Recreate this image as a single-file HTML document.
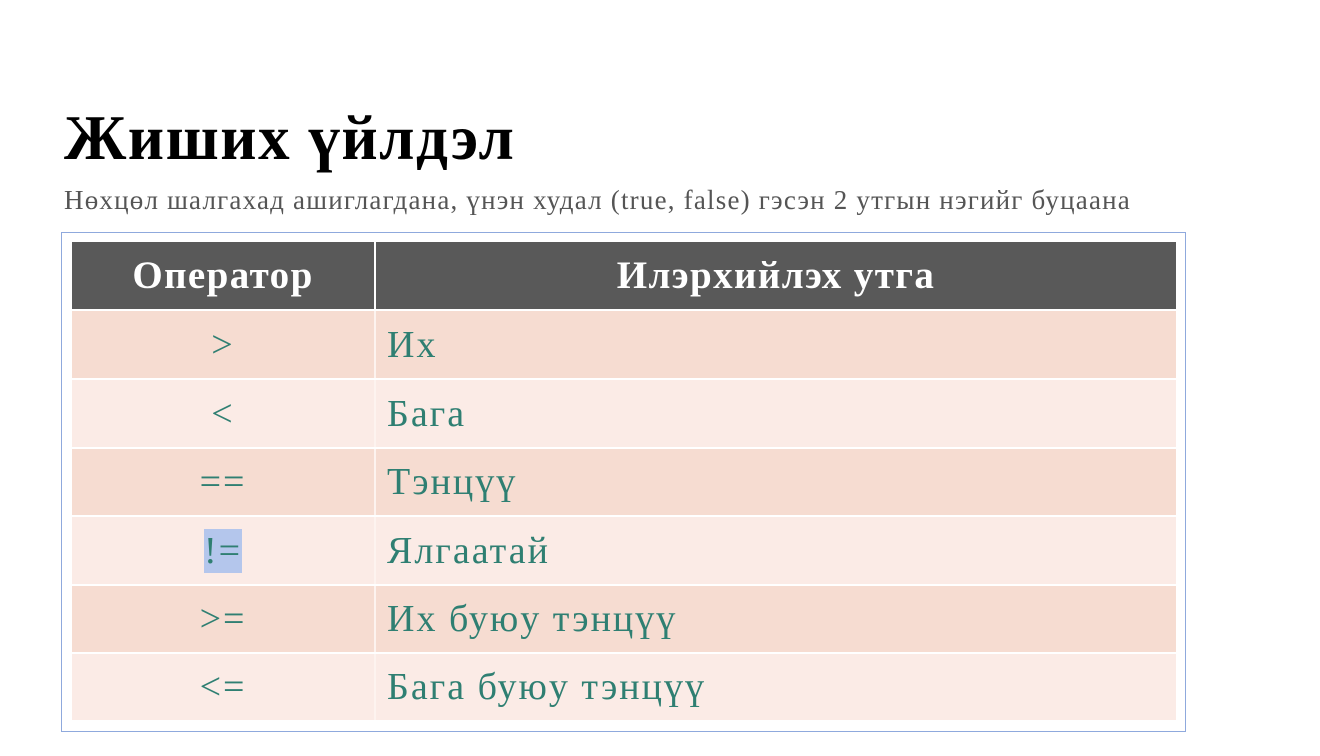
<!DOCTYPE html>
<html><head><meta charset="utf-8"><style>
body{margin:0;width:1320px;height:756px;background:#fff;font-family:"Liberation Serif",serif;position:relative;overflow:hidden}
h1{position:absolute;left:64px;top:102px;margin:0;font-size:63px;font-weight:bold;color:#000;line-height:72px;letter-spacing:1.5px}
.sub{position:absolute;left:64px;top:185px;font-size:27px;color:#555;white-space:nowrap;letter-spacing:1.2px}
.frame{position:absolute;left:61px;top:232px;width:1125px;height:500px;border:1px solid #8fa9dd;box-sizing:border-box}
.row{position:absolute;left:72px;width:1104px;}
.c1,.c2{position:absolute;top:0;bottom:0;display:flex;align-items:center}
.c1{left:0;width:302px;justify-content:center}
.c2{left:304px;right:0;padding-left:11px}
.hd{background:#595959;color:#fff;font-weight:bold;font-size:39px;letter-spacing:1.4px}
.hd .c1{border-right:2px solid #fff}
.d{background:#f6dcd1;color:#2f7f72;font-size:38px;letter-spacing:2px}
.l{background:#fbebe6;color:#2f7f72;font-size:38px;letter-spacing:2px}
.d .c1,.l .c1{border-right:2px solid #fdf3ef}
</style></head><body>
<h1>Жиших үйлдэл</h1>
<div class="sub">Нөхцөл шалгахад ашиглагдана, үнэн худал (true, false) гэсэн 2 утгын нэгийг буцаана</div>
<div class="frame"></div>
<div class="row hd" style="top:242px;height:67px"><div class="c1">Оператор</div><div class="c2" style="padding-left:0;justify-content:center">Илэрхийлэх утга</div></div>
<div class="row d" style="top:311px;height:67px"><div class="c1">&gt;</div><div class="c2">Их</div></div>
<div class="row l" style="top:380px;height:67px"><div class="c1">&lt;</div><div class="c2">Бага</div></div>
<div class="row d" style="top:449px;height:66px"><div class="c1">==</div><div class="c2">Тэнцүү</div></div>
<div class="row l" style="top:517px;height:67px"><div class="c1"><span style="background:#b4c6ec">!=</span></div><div class="c2">Ялгаатай</div></div>
<div class="row d" style="top:586px;height:66px"><div class="c1">&gt;=</div><div class="c2">Их буюу тэнцүү</div></div>
<div class="row l" style="top:654px;height:66px"><div class="c1">&lt;=</div><div class="c2">Бага буюу тэнцүү</div></div>
</body></html>
